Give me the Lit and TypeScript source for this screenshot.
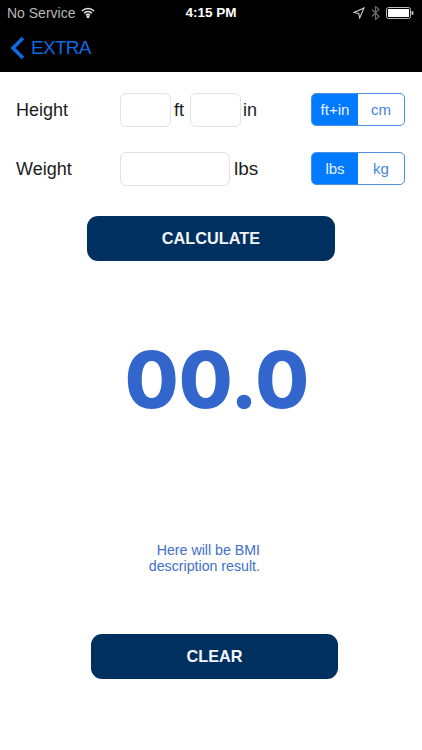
import { LitElement, html, css } from "lit";
import { customElement } from "lit/decorators.js";

@customElement("app-root")
export class AppRoot extends LitElement {
  static styles = css`
    :host { display: block; width: 422px; height: 750px; background: #fff; font-family: "Liberation Sans", Arial, sans-serif; overflow: hidden; }
    .head { background: #000; height: 72px; display: flex; flex-direction: column; }
    .status { height: 25px; display: grid; grid-template-columns: 1fr auto 1fr; align-items: center; padding: 0 7px; color: #d6d6d6; font-size: 14px; }
    .status .left { display: flex; align-items: center; gap: 6px; color: #b9b9b9; }
    .status .time { color: #fff; font-weight: 700; font-size: 13.5px; }
    .status .right { display: flex; justify-content: flex-end; align-items: center; gap: 6px; padding-right: 1px; }
    .nav { display: flex; align-items: center; gap: 6px; padding: 1px 0 0 10px; height: 44px; box-sizing: border-box; color: #1069e0; font-size: 19px; letter-spacing: -0.7px; }
    .form { display: flex; flex-direction: column; gap: 25px; padding: 21px 17px 0 16px; }
    .row { display: flex; align-items: center; height: 34px; font-size: 18px; color: #1c1c1c; }
    .label { width: 104px; }
    .unit { margin-left: 2px; }
    .unit.ft { margin-left: 3px; }
    .unit.lb { margin-left: 4px; font-size: 19px; }
    .input { box-sizing: border-box; height: 34px; border: 1px solid #e2e2e2; border-radius: 6px; background: #fff; }
    .short { width: 51px; }
    .long { width: 110px; }
    .gap { width: 6px; }
    .seg { margin-left: auto; align-self: flex-start; display: flex; width: 94px; height: 33px; box-sizing: border-box; border: 1px solid #4a90e2; border-radius: 5px; overflow: hidden; font-size: 15px; }
    .seg span { flex: 1; display: flex; align-items: center; justify-content: center; color: #3f86d8; }
    .seg .on { background: #007aff; color: #e9f2ff; }
    .cta { display: flex; }
    .btn { height: 45px; border-radius: 11px; background: #00305f; color: #f2f5f8; font-weight: 700; display: flex; align-items: center; justify-content: center; font-size: 16.3px; }
    .calc { width: 248px; margin: 30px 0 0 87px; }
    .score { margin: 69px 0 0 12px; text-align: center; color: #3366cc; font-family: Inter, sans-serif; font-weight: 800; font-size: 78px; line-height: 100px; }
    .desc { margin-top: 112px; margin-left: 140px; width: 120px; text-align: right; color: #4070c8; font-size: 14.2px; line-height: 16px; }
    .clear { width: 247px; margin: 60px 0 0 91px; }
  `;

  render() {
    return html`
      <div class="head">
        <div class="status">
          <div class="left"><span>No Service</span>
            <svg width="14" height="11" viewBox="0 0 14 11" fill="none" stroke="#e6e6e6" stroke-width="1.5"><path d="M1 4a8.500 8.500 0 0 1 12 0M3 6.300a5.200 5.200 0 0 1 8 0M5 8.300a2.400 2.400 0 0 1 4 0"/><circle cx="7" cy="9.800" r=".7" fill="#e6e6e6"/></svg>
          </div>
          <div class="time">4:15 PM</div>
          <div class="right">
            <svg width="12" height="12" viewBox="0 0 12 12" fill="none" stroke="#d0d0d0" stroke-width="1.100"><path d="M11 1L1 5.500l4.700 1 1 4.500z"/></svg>
            <svg width="9" height="14" viewBox="0 0 9 14" fill="none" stroke="#6a6a6a" stroke-width="1.200"><path d="M1 3.500l7 7-3.500 3V.5L8 3.500l-7 7"/></svg>
            <svg width="28" height="12" viewBox="0 0 28 12"><rect x=".5" y=".5" width="24" height="11" rx="2" fill="none" stroke="#bbb"/><rect x="2" y="2" width="21" height="8" fill="#fff"/><rect x="25.500" y="4" width="2" height="4" rx="1" fill="#bbb"/></svg>
          </div>
        </div>
        <div class="nav">
          <svg width="15" height="24" viewBox="0 0 15 24" fill="none" stroke="#1069e0" stroke-width="3.600"><path d="M13 2L3 12l10 10"/></svg>
          <span>EXTRA</span>
        </div>
      </div>
      <div class="form">
        <div class="row">
          <div class="label">Height</div>
          <div class="input short"></div><span class="unit ft">ft</span><div class="gap"></div>
          <div class="input short"></div><span class="unit">in</span>
          <div class="seg"><span class="on">ft+in</span><span>cm</span></div>
        </div>
        <div class="row">
          <div class="label">Weight</div>
          <div class="input long"></div><span class="unit lb">lbs</span>
          <div class="seg"><span class="on">lbs</span><span>kg</span></div>
        </div>
      </div>
      <div class="cta"><div class="btn calc">CALCULATE</div></div>
      <div class="score">00.0</div>
      <div class="desc">Here will be BMI description result.</div>
      <div class="btn clear">CLEAR</div>
    `;
  }
}
